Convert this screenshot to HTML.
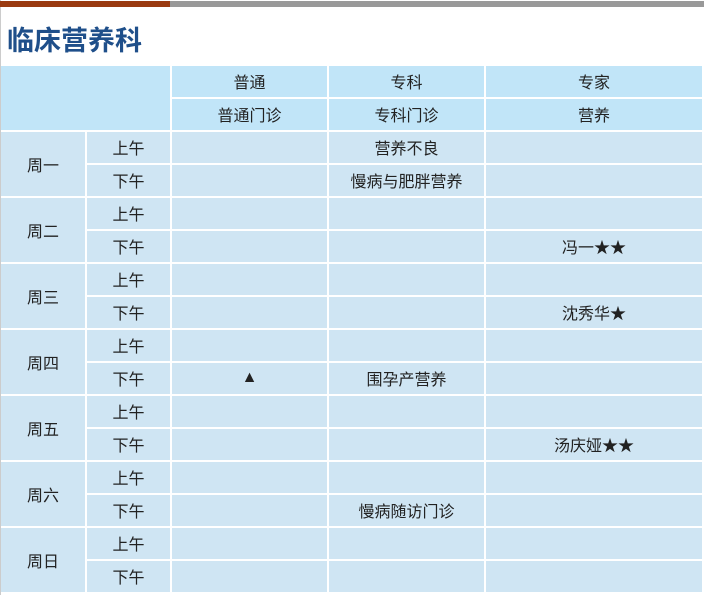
<!DOCTYPE html>
<html><head><meta charset="utf-8"><style>
html,body{margin:0;padding:0;background:#fff;width:704px;height:595px;overflow:hidden;font-family:"Liberation Sans","Noto Sans CJK SC",sans-serif;}
.bar1{position:absolute;left:0;top:1px;width:170px;height:6px;background:#9a3a10}
.bar2{position:absolute;left:170px;top:1px;width:534px;height:6px;background:#999}
.lb{position:absolute;left:0;top:0;width:1px;height:595px;background:#ccc}
h1{position:absolute;left:7px;top:19px;margin:0;font-size:27px;font-weight:bold;color:#1f4f8a;letter-spacing:0px}
.g{position:absolute;left:1px;top:66px;display:grid;grid-template-columns:84px 83px 155px 155px 216px;grid-template-rows:repeat(16,31px);gap:2px}
.g div{background:#cfe5f3;display:flex;align-items:center;justify-content:center;font-size:16px;color:#222;padding-bottom:1px;box-sizing:border-box}
.g .h{background:#c1e5f8}
</style></head><body>
<div class="lb"></div><div class="bar1"></div><div class="bar2"></div>
<h1>临床营养科</h1>
<div class="g">
<div class="h" style="grid-column:1/3;grid-row:1/3"></div>
<div class="h">普通</div><div class="h">专科</div><div class="h">专家</div>
<div class="h">普通门诊</div><div class="h">专科门诊</div><div class="h">营养</div>

<div style="grid-row:span 2">周一</div><div>上午</div><div></div><div>营养不良</div><div></div>
<div>下午</div><div></div><div>慢病与肥胖营养</div><div></div>
<div style="grid-row:span 2">周二</div><div>上午</div><div></div><div></div><div></div>
<div>下午</div><div></div><div></div><div>冯一★★</div>
<div style="grid-row:span 2">周三</div><div>上午</div><div></div><div></div><div></div>
<div>下午</div><div></div><div></div><div>沈秀华★</div>
<div style="grid-row:span 2">周四</div><div>上午</div><div></div><div></div><div></div>
<div>下午</div><div>▲</div><div>围孕产营养</div><div></div>
<div style="grid-row:span 2">周五</div><div>上午</div><div></div><div></div><div></div>
<div>下午</div><div></div><div></div><div>汤庆娅★★</div>
<div style="grid-row:span 2">周六</div><div>上午</div><div></div><div></div><div></div>
<div>下午</div><div></div><div>慢病随访门诊</div><div></div>
<div style="grid-row:span 2">周日</div><div>上午</div><div></div><div></div><div></div>
<div>下午</div><div></div><div></div><div></div>
</div>
</body></html>
